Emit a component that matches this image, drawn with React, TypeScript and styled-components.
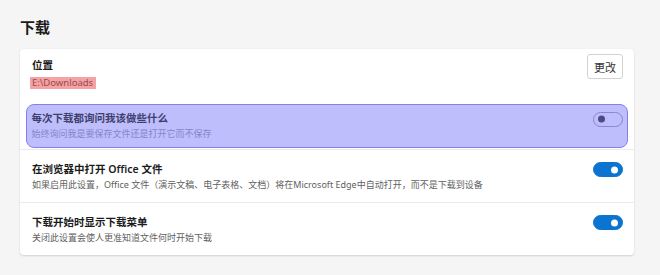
import { createGlobalStyle, styled } from "styled-components";

const GlobalStyle = createGlobalStyle`
  html, body {
    margin: 0;
    background: #f5f5f5;
  }
  body {
    font-family: "Noto Sans", "Noto Sans CJK SC", sans-serif;
    color: #1b1b1b;
  }
`;

type Item = {
  title: string;
  desc: string;
  on: boolean;
  focused?: boolean;
};

const items: Item[] = [
  {
    title: "每次下载都询问我该做些什么",
    desc: "始终询问我是要保存文件还是打开它而不保存",
    on: false,
    focused: true,
  },
  {
    title: "在浏览器中打开 Office 文件",
    desc: "如果启用此设置，Office 文件（演示文稿、电子表格、文档）将在Microsoft Edge中自动打开，而不是下载到设备",
    on: true,
  },
  {
    title: "下载开始时显示下载菜单",
    desc: "关闭此设置会使人更准知道文件何时开始下载",
    on: true,
  },
];

function App() {
  return (
    <Page>
      <GlobalStyle />
      <Heading>下载</Heading>
      <Card>
        <LocationRow>
          <Texts>
            <Title>位置</Title>
            <Path>E:\Downloads</Path>
          </Texts>
          <ChangeButton>更改</ChangeButton>
        </LocationRow>
        {items.map((item) =>
          item.focused ? (
            <FocusRow key={item.title}>
              <Texts>
                <Title $tone="focus">{item.title}</Title>
                <Desc $tone="focus">{item.desc}</Desc>
              </Texts>
              <Toggle $on={item.on} $tone="focus" />
            </FocusRow>
          ) : (
            <Row key={item.title}>
              <Texts>
                <Title>{item.title}</Title>
                <Desc>{item.desc}</Desc>
              </Texts>
              <Toggle $on={item.on} />
            </Row>
          )
        )}
      </Card>
    </Page>
  );
}

const Page = styled.div`
  padding: 17px 26px 20px 20px;
`;

const Heading = styled.h1`
  margin: 0 0 12px;
  font-size: 15px;
  line-height: 20px;
  font-weight: 700;
  color: #1b1b1b;
`;

const Card = styled.section`
  background: #fff;
  border-radius: 4px;
  box-shadow: 0 1px 2px rgba(0, 0, 0, 0.14), 0 0 1px rgba(0, 0, 0, 0.08);
`;

const LocationRow = styled.div`
  display: flex;
  align-items: flex-start;
  justify-content: space-between;
  padding: 5px 11px 11px 12px;
  & > div:first-child {
    padding-top: 4px;
  }
`;

const Row = styled.div`
  display: flex;
  align-items: flex-start;
  justify-content: space-between;
  gap: 16px;
  padding: 12px 11px 11px 12px;
  border-top: 1px solid #ebebeb;
`;

const FocusRow = styled.div`
  display: flex;
  align-items: flex-start;
  justify-content: space-between;
  gap: 16px;
  margin: 4px 6px 1px;
  padding: 5.5px 4.5px 7.5px 4.5px;
  background: #bebefc;
  border: 1.5px solid #877fec;
  border-radius: 8px;
`;

const Texts = styled.div`
  display: flex;
  flex-direction: column;
  min-width: 0;
`;

const Title = styled.div<{ $tone?: "focus" }>`
  font-size: 10.5px;
  line-height: 14px;
  font-weight: 600;
  white-space: nowrap;
  color: ${(p) => (p.$tone === "focus" ? "#3f3f6e" : "#1b1b1b")};
`;

const Desc = styled.div<{ $tone?: "focus" }>`
  margin-top: 3px;
  font-size: 9px;
  line-height: 12px;
  white-space: nowrap;
  color: ${(p) => (p.$tone === "focus" ? "#8585c8" : "#5f5f5f")};
`;

const Path = styled.span`
  align-self: flex-start;
  margin: 5px 0 0 -2px;
  padding: 0 3px 0 2px;
  font-size: 9.5px;
  line-height: 12px;
  color: #9c4a4d;
  background: #f4a2a4;
`;

const ChangeButton = styled.button`
  width: 36px;
  height: 25px;
  padding: 0;
  font-family: inherit;
  font-size: 11px;
  color: #333;
  background: #fff;
  border: 1px solid #d2d2d2;
  border-radius: 3px;
`;

const Toggle = styled.span<{ $on: boolean; $tone?: "focus" }>`
  position: relative;
  flex: none;
  width: 30px;
  height: 15px;
  box-sizing: border-box;
  border-radius: 8px;
  margin-top: ${(p) => (p.$tone === "focus" ? "1px" : "0")};
  background: ${(p) => (p.$on ? "#0b74d1" : "transparent")};
  border: 1px solid ${(p) => (p.$on ? "#0b74d1" : "#8a86cf")};
  &::after {
    content: "";
    position: absolute;
    top: 50%;
    width: 7px;
    height: 7px;
    border-radius: 50%;
    transform: translateY(-50%);
    ${(p) => (p.$on ? "right: 4px;" : "left: 4px;")}
    background: ${(p) => (p.$on ? "#fff" : "#4b4a82")};
  }
`;

export default App;
